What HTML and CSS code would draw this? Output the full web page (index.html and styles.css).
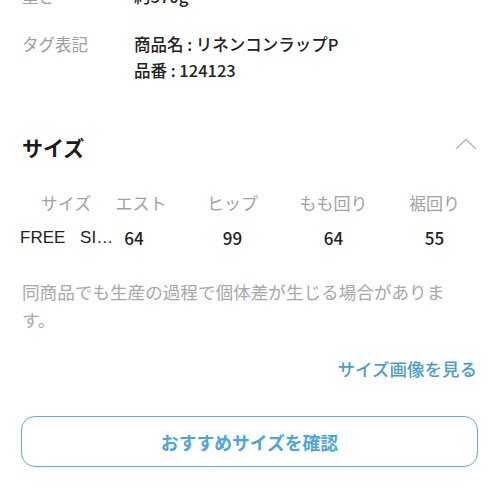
FILE: index.html
```html
<!DOCTYPE html>
<html lang="ja">
<head>
<meta charset="utf-8">
<link rel="stylesheet" href="styles.css">
</head>
<body>
<div class="page">
  <div class="specs">
    <div class="spec-row">
      <div class="spec-label">重さ</div>
      <div class="spec-value">約370g</div>
    </div>
    <div class="spec-row">
      <div class="spec-label">タグ表記</div>
      <div class="spec-value">商品名 : リネンコンラップP<br>品番 : 124123</div>
    </div>
  </div>

  <div class="section-head">
    <h2 class="section-title">サイズ</h2>
    <svg class="chevron" width="22" height="12" viewBox="0 0 22 12"><path d="M1 11 L11 1.5 L21 11" fill="none" stroke="#b5b5b5" stroke-width="1.4"/></svg>
  </div>

  <div class="size-table">
    <div class="cell head c1">サイズ</div>
    <div class="cell head c2">エスト</div>
    <div class="cell head c3">ヒップ</div>
    <div class="cell head">もも回り</div>
    <div class="cell head">裾回り</div>
    <div class="cell data c1 name">FREE SIZE</div>
    <div class="cell data c2 num2">64</div>
    <div class="cell data c3">99</div>
    <div class="cell data">64</div>
    <div class="cell data">55</div>
  </div>

  <p class="note">同商品でも生産の過程で個体差が生じる場合があります。</p>

  <div class="link-row"><a class="size-link">サイズ画像を見る</a></div>

  <button class="reco-btn">おすすめサイズを確認</button>
</div>
</body>
</html>
```
FILE: styles.css
```css
html, body {
  margin: 0;
  padding: 0;
  background: #ffffff;
}
body {
  font-family: "Noto Sans CJK JP", "Noto Sans", sans-serif;
  color: #222222;
}
.page {
  padding: 0 22px 0 22px;
  width: 500px;
  box-sizing: border-box;
  overflow: hidden;
  height: 500px;
}
.specs {
  margin-top: -17px;
  display: flex;
  flex-direction: column;
  gap: 22px;
}
.spec-row {
  display: grid;
  grid-template-columns: 112px 1fr;
  font-size: 16.5px;
  line-height: 26px;
}
.spec-label {
  color: #9e9e9e;
}
.spec-value {
  color: #222222;
  font-weight: 500;
}
.section-head {
  margin-top: 49px;
  display: flex;
  justify-content: space-between;
  align-items: center;
  height: 30px;
}
.section-title {
  margin: 0;
  font-size: 21px;
  font-weight: 700;
  line-height: 30px;
  color: #1a1a1a;
}
.chevron {
  margin-right: 1px;
  margin-top: -6px;
}
.size-table {
  margin-top: 23px;
  margin-left: -2px;
  display: grid;
  grid-template-columns: 94px 54px 115px 101px 101px;
  grid-auto-rows: 35px;
}
.cell {
  display: flex;
  align-items: center;
  justify-content: center;
  font-size: 17px;
  white-space: nowrap;
}
.head {
  color: #a3a3a3;
}
.data {
  color: #222222;
  font-weight: 500;
}
.c1.head {
  padding-right: 2px;
}
.c3 {
  padding-left: 14px;
}
.num2 {
  padding-right: 14px;
}
.name {
  display: block;
  overflow: hidden;
  text-overflow: ellipsis;
  text-align: left;
  line-height: 35px;
  font-family: "Liberation Sans", Arial, sans-serif;
  word-spacing: 10px;
}
.note {
  margin: 23px 0 0 0;
  width: 440px;
  font-size: 17.6px;
  line-height: 28px;
  color: #a8a8a8;
}
.link-row {
  margin-top: 23px;
  display: flex;
  justify-content: flex-end;
  line-height: 24px;
}
.size-link {
  font-size: 17.5px;
  font-weight: 500;
  color: #4d9dcc;
  margin-right: 1px;
}
.reco-btn {
  display: block;
  margin-top: 35px;
  margin-left: -1px;
  width: 457px;
  height: 51px;
  border: 1.2px solid #67a9cc;
  border-radius: 14px;
  background: #ffffff;
  font-family: "Noto Sans CJK JP", sans-serif;
  font-size: 17.8px;
  font-weight: 700;
  color: #4ea5d9;
}
```
